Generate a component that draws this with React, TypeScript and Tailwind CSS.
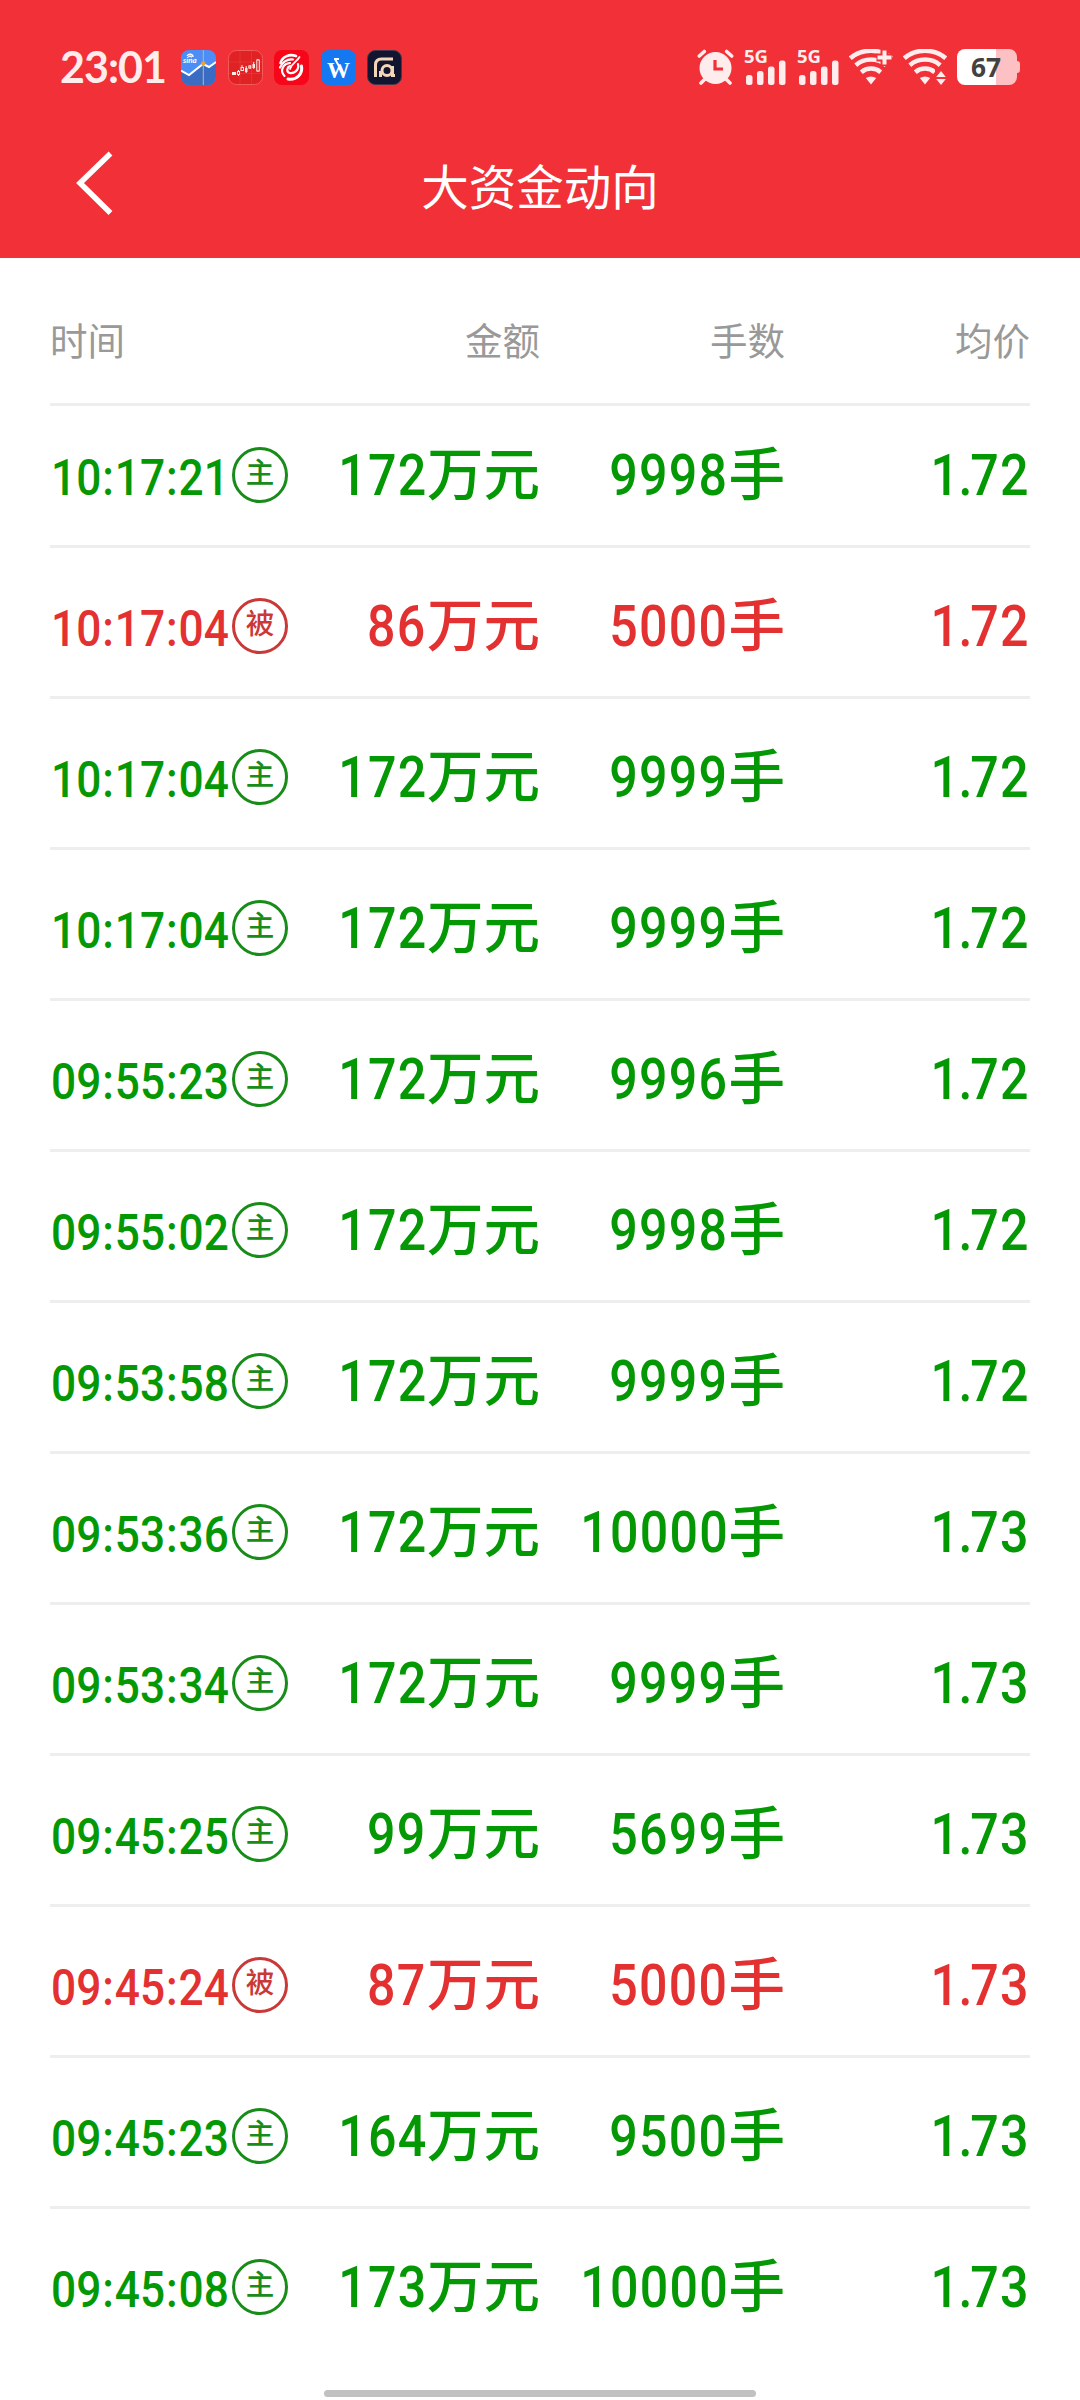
import type { ReactNode } from 'react';

interface Trade {
  time: string;
  active: boolean;
  amount: string;
  hands: string;
  price: string;
}

const trades: Trade[] = [
  { time: '10:17:21', active: true, amount: '172', hands: '9998', price: '1.72' },
  { time: '10:17:04', active: false, amount: '86', hands: '5000', price: '1.72' },
  { time: '10:17:04', active: true, amount: '172', hands: '9999', price: '1.72' },
  { time: '10:17:04', active: true, amount: '172', hands: '9999', price: '1.72' },
  { time: '09:55:23', active: true, amount: '172', hands: '9996', price: '1.72' },
  { time: '09:55:02', active: true, amount: '172', hands: '9998', price: '1.72' },
  { time: '09:53:58', active: true, amount: '172', hands: '9999', price: '1.72' },
  { time: '09:53:36', active: true, amount: '172', hands: '10000', price: '1.73' },
  { time: '09:53:34', active: true, amount: '172', hands: '9999', price: '1.73' },
  { time: '09:45:25', active: true, amount: '99', hands: '5699', price: '1.73' },
  { time: '09:45:24', active: false, amount: '87', hands: '5000', price: '1.73' },
  { time: '09:45:23', active: true, amount: '164', hands: '9500', price: '1.73' },
  { time: '09:45:08', active: true, amount: '173', hands: '10000', price: '1.73' },
];

function AppIcons() {
  return (
    <div className="flex gap-[11.6px]">
      {/* Sina finance */}
      <svg width="35" height="35" viewBox="0 0 35 35">
        <rect width="35" height="35" rx="8" fill="#4d8df6" />
        <path d="M0 20.5 8 25 22 14l6 3 7-5v15a8 8 0 0 1-8 8H8a8 8 0 0 1-8-8z" fill="#3b6cc4" />
        <path d="M0 20.5 8 25 22 14l6 3 7-5" fill="none" stroke="#fff" strokeWidth="2" />
        <path d="M22.3 0v35" stroke="#c9b77c" strokeWidth="1" />
        <circle cx="22.3" cy="13.5" r="2.2" fill="#e8a33a" />
        <path d="M6 6c2-3 6-2 6 1M7.500 7c1-1.500 3-1 3 .5" fill="none" stroke="#fff" strokeWidth="1.300" />
        <text x="2" y="13" fontSize="8" fontStyle="italic" fontWeight="700" fontFamily="Lato, sans-serif" fill="#fff">sina</text>
      </svg>
      {/* Candlesticks */}
      <svg width="35" height="35" viewBox="0 0 35 35">
        <rect x=".5" y=".5" width="34" height="34" rx="8" fill="#e02224" stroke="#f25a58" />
        <path d="M12 1v33M23.500 1v33M1 12h33M1 23.500h33" stroke="#e83a3a" strokeWidth=".7" />
        <g fill="#ffe9e4">
          <rect x="4" y="22" width="4" height="3" />
          <rect x="17" y="18" width="2.500" height="4" />
          <rect x="24.500" y="14" width="2.500" height="4" />
        </g>
        <g fill="none" stroke="#ffe9e4" strokeWidth="1">
          <path d="M10.500 20v6M14 15v6M18.200 16v7M22 15v4M25.700 12v7M30 9v13" />
          <rect x="9.500" y="21.500" width="2" height="3" fill="#e02224" />
          <rect x="13" y="17.500" width="2.500" height="3" fill="#e02224" />
          <rect x="20.800" y="16" width="2" height="2" fill="#e02224" />
          <rect x="28.800" y="10" width="2.500" height="11" fill="#e02224" />
        </g>
      </svg>
      {/* Red swirl */}
      <svg width="35" height="35" viewBox="0 0 35 35">
        <rect width="35" height="35" rx="8" fill="#f7061a" />
        <g fill="none" stroke="#fff" strokeLinecap="round">
          <path d="M22 6C15 3.500 8 7 6.500 13" strokeWidth="2.600" />
          <path d="M6 17.500c3-6 8-8.500 13-8" strokeWidth="2.200" />
          <path d="M14 29c8 1.500 15-4.500 13.500-13" strokeWidth="3" />
          <path d="M10.500 26C5.500 21 9 13.500 16 13" strokeWidth="2.200" />
          <path d="M25.500 7c-2 4-7.500 6-9.500 12" strokeWidth="1.800" />
          <path d="M24 14c1.500 6-4 10-8.500 9-3.500-1.500-2.500-6 .5-7" strokeWidth="2.200" />
        </g>
      </svg>
      {/* Blue W */}
      <svg width="35" height="35" viewBox="0 0 35 35">
        <rect width="35" height="35" rx="8" fill="#1478f0" />
        <text x="6" y="27.500" fontSize="24" fontWeight="700" fontFamily="Liberation Serif, serif" fill="#fff" textLength="23" lengthAdjust="spacingAndGlyphs">W</text>
        <path d="m14 9 5 9M13 9h5" stroke="#fff" strokeWidth="2" />
      </svg>
      {/* Dark mark */}
      <svg width="35" height="35" viewBox="0 0 35 35">
        <rect x=".5" y=".5" width="34" height="34" rx="8" fill="#12152f" stroke="#46364b" />
        <g fill="none" stroke="#f3d5b8" strokeWidth="3">
          <path d="M8.500 27V15c0-4 2.500-6 6-6H26" />
          <circle cx="20" cy="20.500" r="5" />
          <path d="M25.500 16v9.500H28M13.500 27v-6" />
        </g>
      </svg>
    </div>
  );
}

function AlarmIcon() {
  return (
    <svg width="37" height="36" viewBox="0 0 37 36">
      <g stroke="#ffecec" strokeWidth="3.600" strokeLinecap="round">
        <path d="m2.300 7 5-4.500M34.700 7l-5-4.500M8 30l-4 4M29 30l4 4" />
      </g>
      <circle cx="18.500" cy="19" r="16" fill="#ffecec" />
      <path d="M18 11v9h8" fill="none" stroke="#f23037" strokeWidth="3.200" />
    </svg>
  );
}

function SignalIcon() {
  return (
    <svg className="overflow-visible" width="43" height="36" viewBox="0 0 43 36">
      <text x="0" y="13.500" fontSize="18.500" fontWeight="700" fontFamily="Open Sans, sans-serif" fill="#ffecec" textLength="24" lengthAdjust="spacingAndGlyphs">5G</text>
      <g fill="#ffecec">
        <rect x="2" y="26" width="6.500" height="10" rx="2.500" />
        <rect x="13" y="22" width="6.500" height="14" rx="2.500" />
        <rect x="24" y="17.500" width="6.500" height="18.500" rx="2.500" />
        <rect x="35" y="11.500" width="6.500" height="24.500" rx="2.500" />
      </g>
    </svg>
  );
}

function WifiIcon({ children }: { children: ReactNode }) {
  return (
    <svg width="44" height="36" viewBox="0 0 44 36">
      <g fill="none" stroke="#ffecec" strokeWidth="4.500">
        <path d="M1.300 9.200C13-.8 31-.8 42.700 9.200" />
        <path d="M6.800 16.200c8.500-7.500 22-7.500 30.400 0" />
        <path d="M12.300 23.200c5.500-4.800 14-4.800 19.400 0" />
      </g>
      <path d="M16.800 29q5.200-3 10.400 0L22 35.500z" fill="#ffecec" />
      {children}
    </svg>
  );
}

function Battery() {
  return (
    <svg width="63" height="36" viewBox="0 0 63 36">
      <path d="M39 0h13a8 8 0 0 1 8 8v4c2 0 3 1 3 3v6c0 2-1 3-3 3v4a8 8 0 0 1-8 8H39z" fill="#fdc0c3" />
      <path d="M8 0h31v36H8a8 8 0 0 1-8-8V8a8 8 0 0 1 8-8z" fill="#fff" />
      <text x="14" y="28" fontSize="27.500" fontWeight="700" fontFamily="Open Sans, sans-serif" fill="#424242" textLength="30" lengthAdjust="spacingAndGlyphs">67</text>
    </svg>
  );
}

function StatusBar() {
  return (
    <div className="flex h-[134px] items-center pl-[60px] pr-[60px]">
      <span className="w-[121px] whitespace-nowrap pb-[2px] font-['Lato'] text-[43px] font-bold leading-none tracking-[-1px] text-[#ffecec]">23:01</span>
      <AppIcons />
      <div className="ml-auto flex items-center">
        <AlarmIcon />
        <div className="ml-[10px] flex gap-[10px]">
          <SignalIcon />
          <SignalIcon />
        </div>
        <div className="ml-[9px] mr-[10px] flex gap-[10px]">
          <WifiIcon>
            <path d="M35.500 0v17M27.500 8.500h16" stroke="#f23037" strokeWidth="8" />
            <path d="M35.500 1.500v14M28.500 8.500h14" stroke="#ffecec" strokeWidth="4" />
          </WifiIcon>
          <WifiIcon>
            <path d="M38 19v17" stroke="#f23037" strokeWidth="12" />
            <path d="m38 22 4.800 6h-9.600zM38 36l4.800-6h-9.600z" fill="#ffecec" />
          </WifiIcon>
        </div>
        <Battery />
      </div>
    </div>
  );
}

function TradeRow({ trade }: { trade: Trade }) {
  const [whole, decimals] = trade.price.split('.');

  return (
    <div
      className={`flex h-[151px] items-end border-b-[3px] border-[#eeeeee] pb-[30px] first:h-[142px] last:border-transparent ${
        trade.active ? 'text-[#059805]' : 'text-[#e33131]'
      }`}
    >
      <div className="flex h-20 w-[245px] items-center">
        <div className="w-[182px] pl-px pt-[5px]">
          <span className="inline-block origin-left scale-x-[0.885] text-[50px] font-medium leading-none">
            {trade.time.split(':').map((part, i) => (
              <span key={i}>
                {i > 0 && <span className="ml-[1px] mr-[1px]">:</span>}
                {part}
              </span>
            ))}
          </span>
        </div>
        <div
          className={`flex size-14 shrink-0 items-center justify-center rounded-full border-[3px] pb-px text-[28.5px] font-medium leading-none ${
            trade.active ? 'border-[#188c18] text-[#188c18]' : 'border-[#cb3838] text-[#cb3838]'
          }`}
        >
          {trade.active ? '主' : '被'}
        </div>
      </div>
      <Cell value={trade.amount} unit="万元" />
      <Cell value={trade.hands} unit="手" />
      <div className="flex h-20 w-[245px] items-center justify-end text-[57px] font-medium leading-none">
        <span className="origin-right scale-x-[0.88] tracking-[1.4px]">
          {whole}
          <span className="-ml-[2px] -mr-[4px]">.</span>
          {decimals}
        </span>
      </div>
    </div>
  );
}

function Cell({ value, unit }: { value: string; unit: string }) {
  return (
    <div className="flex h-20 w-[245px] items-center justify-end text-[57px] font-medium leading-none">
      <span className="origin-right scale-x-[0.88] tracking-[1.4px]">{value}</span>
      <span className="pt-[3px] text-[56.5px]">{unit}</span>
    </div>
  );
}

export default function App() {
  return (
    <div className="flex h-[2400px] w-[1080px] flex-col overflow-hidden bg-white font-['Roboto','Noto_Sans_CJK_SC',sans-serif]">
      <header className="h-[258px] shrink-0 bg-[#f23037] text-white">
        <StatusBar />
        <div className="grid h-[100px] grid-cols-[200px_1fr_200px] items-center">
          <svg className="ml-[74px]" width="42" height="68" viewBox="0 0 42 68">
            <path d="M36.500 3.500 6 33l30.500 30" fill="none" stroke="#fff" strokeWidth="5.500" />
          </svg>
          <h1 className="pt-[12px] text-center text-[47.5px] leading-none">大资金动向</h1>
        </div>
      </header>

      <main className="px-[50px]">
        <div className="grid h-[148px] grid-cols-4 items-center border-b-[3px] border-[#eeeeee] pt-[23px] text-[37.5px] text-[#999999]">
          <span>时间</span>
          <span className="text-right">金额</span>
          <span className="text-right">手数</span>
          <span className="text-right">均价</span>
        </div>
        <div>
          {trades.map((trade, i) => (
            <TradeRow key={i} trade={trade} />
          ))}
        </div>
      </main>

      <div className="mx-auto mb-[3px] mt-auto h-[7px] w-[432px] shrink-0 rounded-full bg-[#c1c1c1]" />
    </div>
  );
}
